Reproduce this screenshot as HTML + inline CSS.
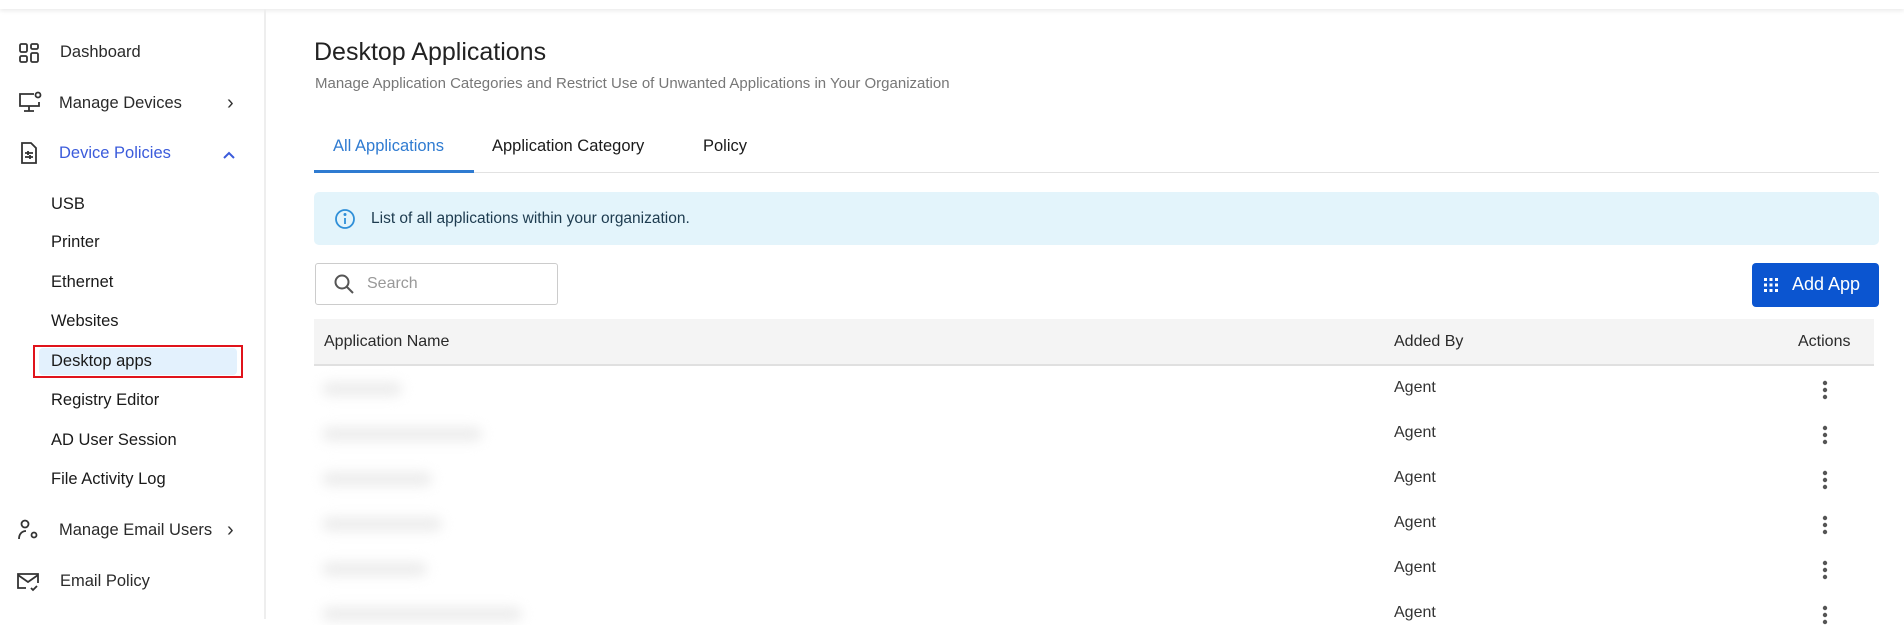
<!DOCTYPE html>
<html><head><meta charset="utf-8"><style>
*{box-sizing:border-box;margin:0;padding:0}
body{width:1904px;height:610px;overflow:hidden;background:#fff;font-family:"Liberation Sans",sans-serif;color:#222;position:relative}
.top{position:absolute;left:0;top:0;width:1904px;height:9px;background:#fff;box-shadow:0 2px 4px rgba(0,0,0,.08)}
.side{position:absolute;left:0;top:9px;width:266px;height:610px;border-right:2px solid #eee}
.t{position:absolute;white-space:nowrap}
.nav{font-size:16.5px;color:#2a2a2a}
.sub{font-size:16.5px;color:#1a1a1a;left:51px}
svg{position:absolute}
</style></head><body>
<div class="top"></div>
<div class="side"></div>
<svg style="left:18px;top:42px" width="22" height="22" viewBox="0 0 22 22" fill="none" stroke="#333" stroke-width="1.8"><rect x="2" y="2" width="7" height="8" rx="1.5"/><rect x="13" y="2" width="7" height="5" rx="1.5"/><rect x="2" y="14" width="7" height="6" rx="1.5"/><rect x="13" y="11" width="7" height="9" rx="1.5"/></svg>
<svg style="left:17px;top:91px" width="26" height="24" viewBox="0 0 26 24" fill="none" stroke="#333" stroke-width="1.8"><path d="M17 3H3v12h19v-4"/><path d="M12 15v5M7 20h10"/><circle cx="21" cy="4" r="2.5"/></svg>
<svg style="left:19px;top:141px" width="20" height="24" viewBox="0 0 20 24" fill="none" stroke="#333" stroke-width="1.8"><path d="M3 2h9l5 5v15H3z"/><path d="M6 12h8M6 16h8M9 10v4M11 14v4"/></svg>
<svg style="left:17px;top:518px" width="24" height="24" viewBox="0 0 24 24" fill="none" stroke="#333" stroke-width="1.8"><circle cx="8" cy="6" r="3.5"/><path d="M2 21c0-5 3-8 7-8"/><circle cx="17" cy="17" r="2.5"/></svg>
<svg style="left:16px;top:570px" width="26" height="24" viewBox="0 0 26 24" fill="none" stroke="#333" stroke-width="1.8"><path d="M10 18H2V4h20v9"/><path d="M2 5l10 7 10-7"/><path d="M15 18l2 2 4-4"/></svg>
<div class="t nav" style="left:60px;top:43px">Dashboard</div>
<div class="t nav" style="left:59px;top:94px">Manage Devices</div>
<div class="t" style="left:227px;top:92px;font-size:20px;color:#333">›</div>
<div class="t nav" style="left:59px;top:144px;color:#3b5bdb">Device Policies</div>
<svg style="left:223px;top:151px" width="12" height="8" viewBox="0 0 12 8" fill="none" stroke="#3b5bdb" stroke-width="2"><path d="M1 7l5-5 5 5"/></svg>
<div class="t sub" style="top:195px">USB</div>
<div class="t sub" style="top:233px">Printer</div>
<div class="t sub" style="top:273px">Ethernet</div>
<div class="t sub" style="top:312px">Websites</div>
<div style="position:absolute;left:33px;top:345px;width:210px;height:33px;border:2px solid #e0131b"></div>
<div style="position:absolute;left:39px;top:348px;width:198px;height:27px;background:#e3f1fd;border-radius:4px"></div>
<div class="t sub" style="top:352px">Desktop apps</div>
<div class="t sub" style="top:391px">Registry Editor</div>
<div class="t sub" style="top:431px">AD User Session</div>
<div class="t sub" style="top:470px">File Activity Log</div>
<div class="t nav" style="left:59px;top:521px">Manage Email Users</div>
<div class="t" style="left:227px;top:519px;font-size:20px;color:#333">›</div>
<div class="t nav" style="left:60px;top:572px">Email Policy</div>
<div class="t" style="left:314px;top:38px;font-size:25px;color:#222">Desktop Applications</div>
<div class="t" style="left:315px;top:75px;font-size:15px;color:#777">Manage Application Categories and Restrict Use of Unwanted Applications in Your Organization</div>
<div class="t" style="left:333px;top:137px;font-size:16.5px;color:#2f7bd1">All Applications</div>
<div class="t" style="left:492px;top:137px;font-size:16.5px;color:#1a1a1a">Application Category</div>
<div class="t" style="left:703px;top:137px;font-size:16.5px;color:#1a1a1a">Policy</div>
<div style="position:absolute;left:314px;top:172px;width:1565px;height:1px;background:#e2e2e2"></div>
<div style="position:absolute;left:314px;top:170px;width:160px;height:3px;background:#2f7bd1"></div>
<div style="position:absolute;left:314px;top:192px;width:1565px;height:53px;background:#e3f4fb;border-radius:5px"></div>
<svg style="left:334px;top:208px" width="22" height="22" viewBox="0 0 22 22" fill="none" stroke="#2f8fd8" stroke-width="1.8"><circle cx="11" cy="11" r="9"/><path d="M11 10v6"/><circle cx="11" cy="6.5" r=".6" fill="#2f8fd8"/></svg>
<div class="t" style="left:371px;top:210px;font-size:15.5px;color:#1d3b4f">List of all applications within your organization.</div>
<div style="position:absolute;left:315px;top:263px;width:243px;height:42px;border:1px solid #ccc;border-radius:3px"></div>
<svg style="left:333px;top:273px" width="22" height="22" viewBox="0 0 22 22" fill="none" stroke="#555" stroke-width="2"><circle cx="9" cy="9" r="6.5"/><path d="M14 14l6 6"/></svg>
<div class="t" style="left:367px;top:275px;font-size:16px;color:#999">Search</div>
<div style="position:absolute;left:1752px;top:263px;width:127px;height:44px;background:#0b55d0;border-radius:4px"></div>
<svg style="left:1764px;top:278px" width="14" height="14" viewBox="0 0 14 14" fill="#fff"><rect x="0" y="0" width="3" height="3"/><rect x="5.5" y="0" width="3" height="3"/><rect x="11" y="0" width="3" height="3"/><rect x="0" y="5.5" width="3" height="3"/><rect x="5.5" y="5.5" width="3" height="3"/><rect x="11" y="5.5" width="3" height="3"/><rect x="0" y="11" width="3" height="3"/><rect x="5.5" y="11" width="3" height="3"/><rect x="11" y="11" width="3" height="3"/></svg>
<div class="t" style="left:1792px;top:274px;font-size:18px;color:#fff">Add App</div>
<div style="position:absolute;left:314px;top:319px;width:1560px;height:47px;background:#f4f4f4;border-bottom:2px solid #e0e0e0"></div>
<div class="t" style="left:324px;top:333px;font-size:16px;color:#2a2a2a">Application Name</div>
<div class="t" style="left:1394px;top:333px;font-size:16px;color:#2a2a2a">Added By</div>
<div class="t" style="left:1798px;top:333px;font-size:16px;color:#2a2a2a">Actions</div>
<div id="rows"></div>
<script>
var ys=[390,435,480,525,570,615],ws=[80,160,110,120,105,200],h='';
ys.forEach(function(y,i){
h+='<div style="position:absolute;left:322px;top:'+(y-8)+'px;width:'+ws[i]+'px;height:14px;background:#ececec;border-radius:8px;filter:blur(6px)"></div>';
h+='<div class="t" style="left:1394px;top:'+(y-11)+'px;font-size:16px;color:#333">Agent</div>';
h+='<svg style="left:1822px;top:'+(y-10)+'px" width="6" height="20" viewBox="0 0 6 20" fill="#555"><circle cx="3" cy="3" r="2.2"/><circle cx="3" cy="10" r="2.2"/><circle cx="3" cy="17" r="2.2"/></svg>';
});
document.getElementById('rows').innerHTML=h;
</script>
</body></html>
